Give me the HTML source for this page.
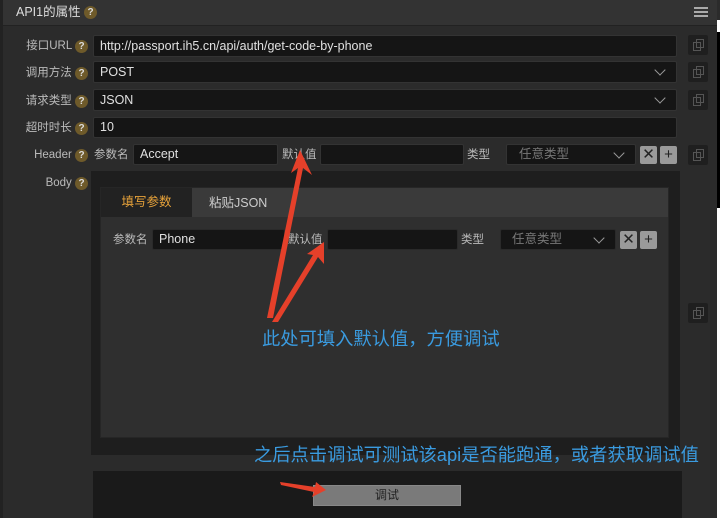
<!DOCTYPE html>
<html><head><meta charset="utf-8"><style>
*{box-sizing:border-box;margin:0;padding:0}
body{width:720px;height:518px;background:#fff;position:relative;overflow:hidden;font-family:"Liberation Sans","Noto Sans CJK SC",sans-serif;font-size:12px;color:#ddd;line-height:14px}
.a{position:absolute}
.main{left:0;top:0;width:717px;height:518px;background:#2b2b2b;border-left:3px solid #222}
.hdr{left:3px;top:0;width:714px;height:26px;background:#333;border-bottom:1px solid #222}
.q{display:inline-block;width:13px;height:13px;border-radius:50%;background:#6e5a2a;color:#ddd;font-size:10px;text-align:center;line-height:13px;font-weight:bold;vertical-align:top;margin-top:1px}
.lab{color:#bbb;text-align:right;width:88px;left:0;font-size:11.5px}
.in{background:#151515;border:1px solid #333;border-radius:2px;color:#e0e0e0;padding-left:6px;font-size:12.5px}
.cp{width:20px;height:20px;background:#1f1f1f;border-radius:2px;left:688px}
.cp:after{content:"";position:absolute;left:5px;top:7px;width:6px;height:7px;border:1px solid #555}
.cp:before{content:"";position:absolute;left:8px;top:4px;width:6px;height:7px;border:1px solid #555}
.chev{right:12px;top:4px;width:8px;height:8px;border-right:1.3px solid #999;border-bottom:1.3px solid #999;transform:rotate(45deg)}
.bx{width:17px;height:18px;background:#9a9a9a;color:#222;text-align:center;line-height:18px;font-size:15px;border-radius:2px}
.sm{color:#bbb;font-size:11.5px}
.blue{color:#3a9be0;white-space:nowrap}
</style></head><body>
<div class="a" style="left:717px;top:0;width:3px;height:20px;background:#2b2b2b"></div>
<div class="a" style="left:717px;top:32px;width:3px;height:176px;background:#000"></div>
<div class="a main"></div>
<div class="a hdr"><span class="a" style="left:13px;top:5px;font-size:12.5px;color:#ddd">API1的属性 <span class="q">?</span></span>
<div class="a" style="left:691px;top:7px;width:14px;height:2px;background:#aaa;box-shadow:0 4px 0 #aaa,0 8px 0 #aaa"></div></div>

<div class="a lab" style="top:39px">接口URL <span class="q">?</span></div>
<div class="a in" style="left:93px;top:35px;width:584px;height:22px;line-height:20px">http://passport.ih5.cn/api/auth/get-code-by-phone</div>
<div class="a cp" style="top:35px"></div>
<div class="a lab" style="top:66px">调用方法 <span class="q">?</span></div>
<div class="a in" style="left:93px;top:61px;width:584px;height:22px;line-height:20px">POST<span class="a chev"></span></div>
<div class="a cp" style="top:62px"></div>
<div class="a lab" style="top:94px">请求类型 <span class="q">?</span></div>
<div class="a in" style="left:93px;top:89px;width:584px;height:22px;line-height:20px">JSON<span class="a chev"></span></div>
<div class="a cp" style="top:90px"></div>
<div class="a lab" style="top:121px">超时时长 <span class="q">?</span></div>
<div class="a in" style="left:93px;top:117px;width:584px;height:21px;line-height:19px">10</div>

<div class="a lab" style="top:148px">Header <span class="q">?</span></div>
<div class="a sm" style="left:94px;top:148px">参数名</div>
<div class="a in" style="left:133px;top:144px;width:145px;height:21px;line-height:19px">Accept</div>
<div class="a sm" style="left:282px;top:148px">默认值</div>
<div class="a in" style="left:320px;top:144px;width:144px;height:21px"></div>
<div class="a sm" style="left:467px;top:148px">类型</div>
<div class="a in" style="left:506px;top:144px;width:130px;height:21px;line-height:19px;color:#777;padding-left:12px">任意类型<span class="a chev"></span></div>
<div class="a bx" style="left:640px;top:146px">✕</div>
<div class="a bx" style="left:660px;top:146px">+</div>
<div class="a cp" style="top:145px"></div>

<div class="a lab" style="top:176px">Body <span class="q">?</span></div>
<div class="a" style="left:91px;top:171px;width:589px;height:284px;background:#1e1e1e"></div>
<div class="a" style="left:100px;top:187px;width:569px;height:251px;background:#2f2f2f;border:1px solid #262626"></div>
<div class="a" style="left:101px;top:188px;width:567px;height:29px;background:#3a3a3a"></div>
<div class="a" style="left:101px;top:188px;width:91px;height:29px;background:#222;color:#e8a33a;text-align:center;line-height:29px;font-size:12.5px">填写参数</div>
<div class="a" style="left:209px;top:196px;color:#ccc;font-size:12.5px">粘贴JSON</div>
<div class="a sm" style="left:113px;top:233px">参数名</div>
<div class="a in" style="left:152px;top:229px;width:133px;height:21px;line-height:19px;border-color:#2a2a2a">Phone</div>
<div class="a sm" style="left:288px;top:233px">默认值</div>
<div class="a in" style="left:327px;top:229px;width:131px;height:21px;border-color:#2a2a2a"></div>
<div class="a sm" style="left:461px;top:233px">类型</div>
<div class="a in" style="left:500px;top:229px;width:116px;height:21px;line-height:19px;color:#777;padding-left:11px;border-color:#2a2a2a">任意类型<span class="a chev"></span></div>
<div class="a bx" style="left:620px;top:231px">✕</div>
<div class="a bx" style="left:640px;top:231px">+</div>
<div class="a cp" style="top:303px"></div>

<div class="a" style="left:93px;top:471px;width:589px;height:47px;background:#1a1a1a"></div>
<div class="a" style="left:313px;top:485px;width:148px;height:21px;background:#7a7a7a;border:1px solid #888;color:#222;text-align:center;line-height:19px;font-size:12px">调试</div>

<svg class="a" style="left:0;top:0" width="720" height="518">
<polygon fill="#e5402a" points="267,318 273,318 303,168 312,175 300,150 291,173 298,168"/>
<polygon fill="#e5402a" points="272,322 278,322 318,257 324,264 324,242 307,254 313,255"/>
<polygon fill="#e5402a" points="280,482 281,485 314,492 312,497 326,490 316,482 315,487"/>
</svg>
<div class="a blue" style="left:262px;top:329px;font-size:18.3px;line-height:20px">此处可填入默认值，方便调试</div>
<div class="a blue" style="left:254px;top:445px;font-size:18.3px;line-height:20px">之后点击调试可测试该api是否能跑通，或者获取调试值</div>
</body></html>
